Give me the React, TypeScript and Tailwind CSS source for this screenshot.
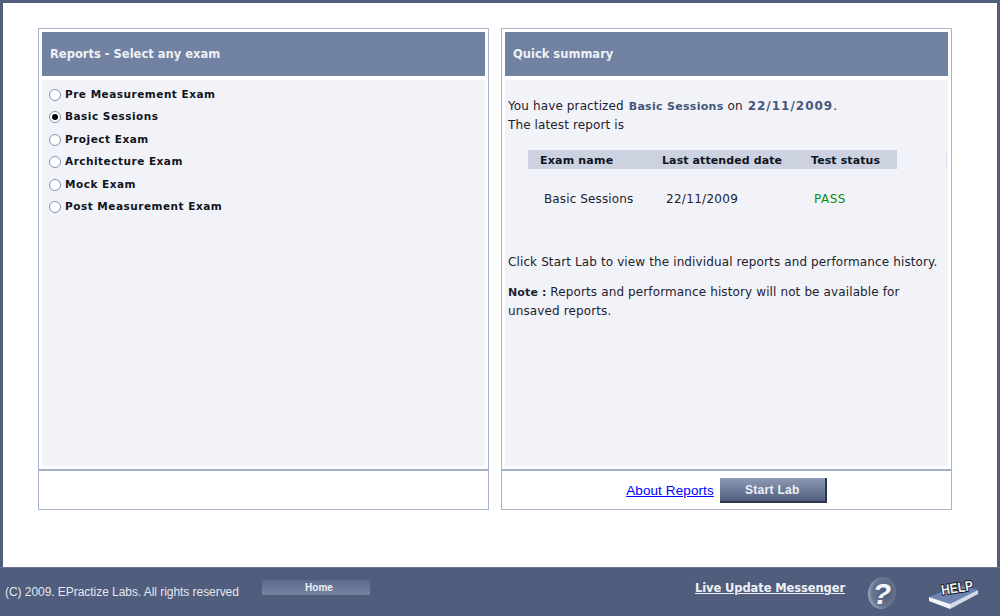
const exams = [
  "Pre Measurement Exam",
  "Basic Sessions",
  "Project Exam",
  "Architecture Exam",
  "Mock Exam",
  "Post Measurement Exam",
];

const verdana = "font-['DejaVu_Sans',sans-serif]";

function Radio({ checked }: { checked: boolean }) {
  return (
    <span className="w-[12px] h-[12px] rounded-full border border-[#8195b0] bg-white flex items-center justify-center shrink-0">
      {checked && <span className="w-[6px] h-[6px] rounded-full bg-black" />}
    </span>
  );
}

function QuestionIcon() {
  return (
    <svg width="32" height="34" viewBox="0 0 32 34">
      <defs>
        <radialGradient id="ball" cx="0.6" cy="0.45" r="0.65">
          <stop offset="0" stopColor="#4f5d7c" />
          <stop offset="0.7" stopColor="#66748f" />
          <stop offset="1" stopColor="#aab4c6" />
        </radialGradient>
      </defs>
      <ellipse cx="16" cy="17" rx="14" ry="16" fill="url(#ball)" transform="rotate(12 16 17)" />
      <text
        x="16"
        y="28"
        textAnchor="middle"
        fontSize="30"
        fontWeight="700"
        fontStyle="italic"
        fontFamily="'Liberation Sans', sans-serif"
        fill="#f4f5f8"
      >
        ?
      </text>
    </svg>
  );
}

function HelpIcon() {
  return (
    <svg width="56" height="34" viewBox="0 0 56 34">
      <path d="M1 20 30 8l20 5-28 14z" fill="#6d84b3" />
      <path d="M1 20l21 7v5L1 24z" fill="#f2f4f8" />
      <path d="M22 27l28-14v4L22 32z" fill="#d5dbe8" />
      <text
        x="0"
        y="0"
        transform="translate(14 18) rotate(-9)"
        fontSize="14"
        fontWeight="700"
        fontFamily="'Liberation Sans', sans-serif"
        textLength="32"
        lengthAdjust="spacingAndGlyphs"
        fill="#eef0f5"
        stroke="#10131c"
        strokeWidth="1.8"
        paintOrder="stroke"
      >
        HELP
      </text>
    </svg>
  );
}

function Panel({
  title,
  children,
  footer,
}: {
  title: string;
  children: React.ReactNode;
  footer?: React.ReactNode;
}) {
  return (
    <div className="w-[451px] h-[482px] border border-[#a9b6cf] bg-white flex flex-col">
      <div className="px-[3px] pt-[3px] pb-[3px] h-[440px] flex flex-col">
        <div className="h-[44px] bg-[#7282a3] flex items-center pl-[8px] pt-[2px] text-[11.500px] font-bold text-[#eef1f6] shrink-0">
          {title}
        </div>
        <div className="flex-1 mt-[4px] bg-[#f2f3f8]">{children}</div>
      </div>
      <div className="flex-1 border-t-2 border-[#a3b1c4] flex items-center justify-center">
        {footer}
      </div>
    </div>
  );
}

export default function App() {
  return (
    <div className={`w-[1000px] h-[616px] overflow-hidden bg-[#505d7d] flex flex-col pt-[3px] ${verdana}`}>
      <div className="h-[564px] mx-[3px] bg-white flex gap-[12px] pl-[35px] pt-[25px]">
        <Panel title="Reports - Select any exam">
          <div className="flex flex-col pt-[3.500px] pl-[7px]">
            {exams.map((exam, i) => (
              <div
                key={exam}
                className="h-[22.500px] flex items-center gap-[4px] text-[10.500px] font-bold text-[#10131c] tracking-[0.5px]"
              >
                <Radio checked={i === 1} />
                {exam}
              </div>
            ))}
          </div>
        </Panel>
        <Panel
          title="Quick summary"
          footer={
            <div className="flex items-center gap-[6px]">
              <a href="#" className="pt-[3px] font-['Liberation_Sans',sans-serif] text-[13.500px] tracking-[0.1px] text-[#0000ff] underline">
                About Reports
              </a>
              <button className="w-[107px] h-[25px] pt-[2px] bg-gradient-to-b from-[#8d9ab5] to-[#525f80] border-r-2 border-b-2 border-[#2c3650] text-[12px] font-bold text-[#eef0f5] font-['Liberation_Sans',sans-serif] tracking-[0.3px]">
                Start Lab
              </button>
            </div>
          }
        >
          <div className="pt-[17px] pl-[3px] text-[12px] tracking-[0.12px] leading-[18px] text-[#1d2230]">
            <p>
              You have practized{" "}
              <span className="ml-[1px] font-bold text-[#46567a] text-[11px] tracking-[0.3px]">Basic Sessions</span> on{" "}
              <span className="ml-[1px] font-bold text-[#46567a] tracking-[1px]">22/11/2009</span>.
            </p>
            <p>The latest report is</p>
            <div className="mt-[16px] ml-[20px] w-[419px] h-[19px] border-r border-[#dde0e9]">
              <div className="w-[369px] h-[19px] pt-[2px] bg-[#ccd2e0] flex items-center text-[11px] font-bold text-[#10131c] tracking-[0.1px]">
                <span className="w-[134px] pl-[12px] tracking-[0.2px]">Exam name</span>
                <span className="w-[149px]">Last attended date</span>
                <span>Test status</span>
              </div>
            </div>
            <div className="mt-[20px] ml-[20px] h-[20px] flex items-center">
              <span className="w-[138px] pl-[16px]">Basic Sessions</span>
              <span className="w-[148px] tracking-[0.3px]">22/11/2009</span>
              <span className="text-[#128a12] tracking-[0.5px]">PASS</span>
            </div>
            <p className="mt-[44px]">Click Start Lab to view the individual reports and performance history.</p>
            <p className="mt-[12px] w-[420px]">
              <span className="font-bold text-[11px]">Note :</span> Reports and performance history will not be available for
              unsaved reports.
            </p>
          </div>
        </Panel>
      </div>
      <div className="flex-1 border-t border-[#6a7792] flex text-white relative">
        <span className="font-['Liberation_Sans',sans-serif] text-[12px] tracking-[-0.05px] text-[#e4e7ee] ml-[5px] mt-[15px] w-[257px]">
          (C) 2009. EPractize Labs. All rights reserved
        </span>
        <div className="w-[108px] h-[15px] mt-[12px] bg-gradient-to-b from-[#5d6c8e] to-[#74849f] text-[10px] font-bold font-['Liberation_Sans',sans-serif] text-[#eef0f5] flex items-center justify-center pl-[6px]">
          Home
        </div>
        <a href="#" className="ml-[325px] mt-[12px] text-[11.500px] font-bold underline text-[#eef0f5] h-fit tracking-[-0.1px]">
          Live Update Messenger
        </a>
        <div className="absolute left-[866px] top-[8px]">
          <QuestionIcon />
        </div>
        <div className="absolute left-[928px] top-[9px]">
          <HelpIcon />
        </div>
      </div>
    </div>
  );
}
